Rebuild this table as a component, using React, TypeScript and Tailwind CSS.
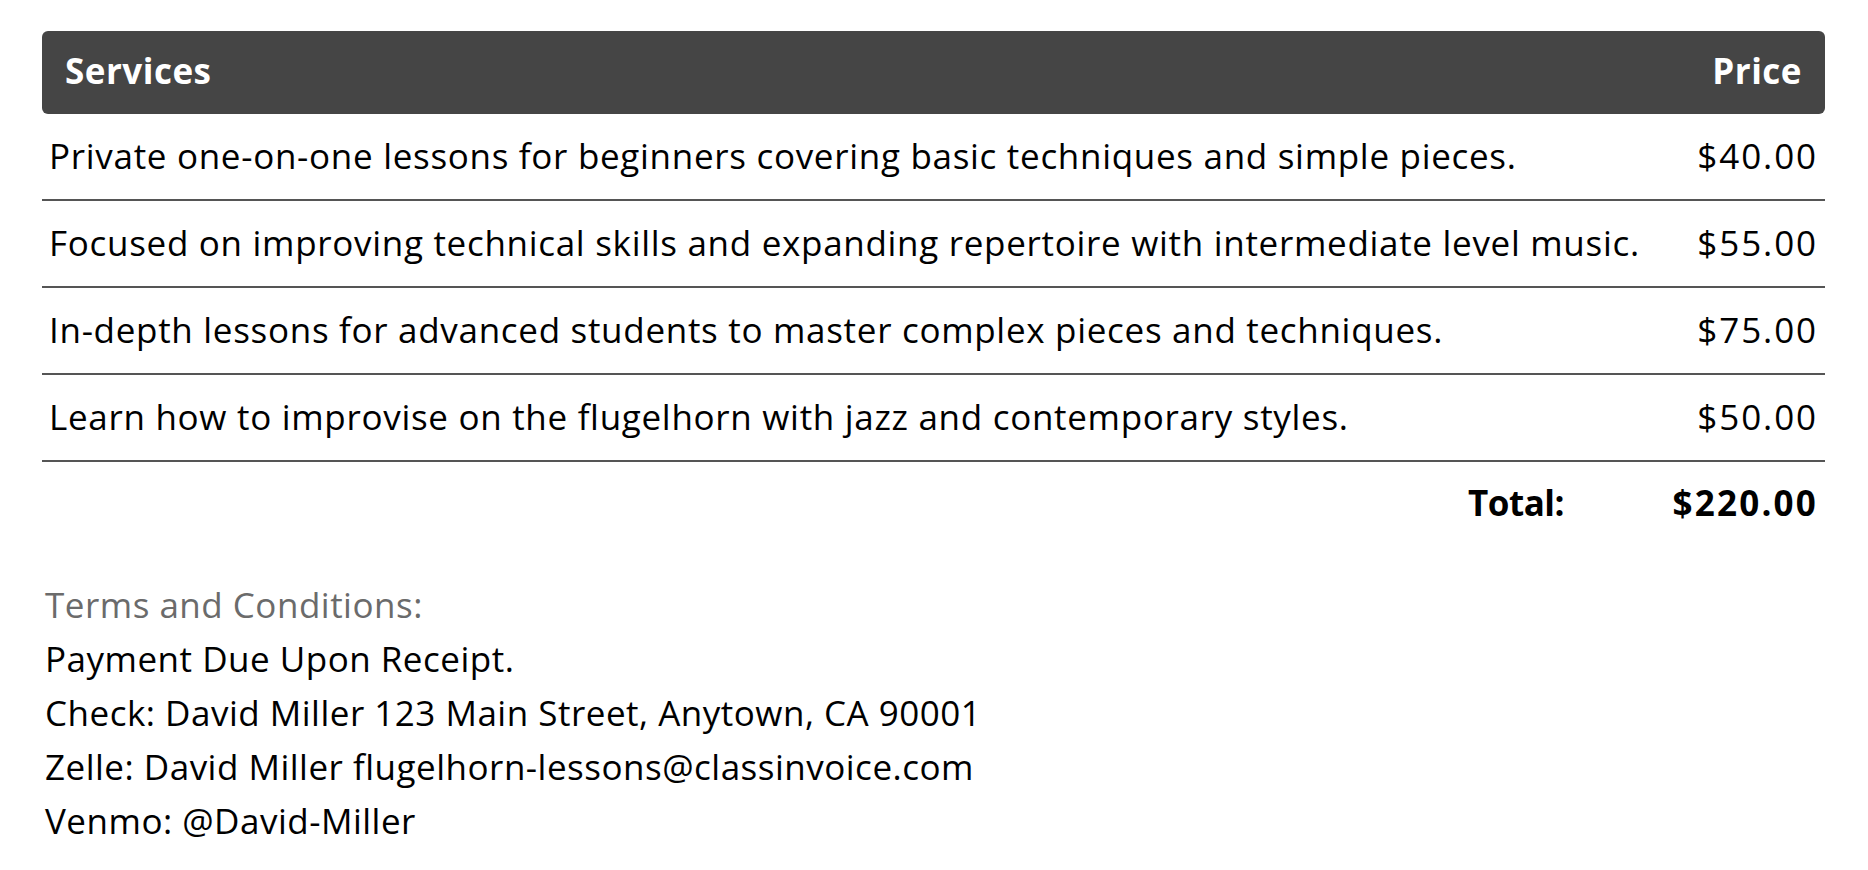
const services = [
  { desc: "Private one-on-one lessons for beginners covering basic techniques and simple pieces.", price: "$40.00" },
  { desc: "Focused on improving technical skills and expanding repertoire with intermediate level music.", price: "$55.00" },
  { desc: "In-depth lessons for advanced students to master complex pieces and techniques.", price: "$75.00" },
  { desc: "Learn how to improvise on the flugelhorn with jazz and contemporary styles.", price: "$50.00" },
];

const terms = [
  "Payment Due Upon Receipt.",
  "Check: David Miller 123 Main Street, Anytown, CA 90001",
  "Zelle: David Miller flugelhorn-lessons@classinvoice.com",
  "Venmo: @David-Miller",
];

export default function App() {
  return (
    <div className="min-h-screen w-full bg-white font-['Open_Sans',_sans-serif] font-medium text-black">
      <div className="ml-[42px] w-[1783px] pt-[31px]">
        <div className="flex h-[83px] items-center justify-between rounded-md bg-[#454545] px-[23px] pb-[3px] text-[35px] font-bold tracking-[0.5px] text-white">
          <span>Services</span>
          <span>Price</span>
        </div>

        {services.map((s) => (
          <div
            key={s.price + s.desc}
            className="flex h-[87px] items-center justify-between border-b-2 border-[#555555] px-[7px] text-[35px]"
          >
            <span className="tracking-[0.7px]">{s.desc}</span>
            <span className="tracking-[1.9px]">{s.price}</span>
          </div>
        ))}

        <div className="flex h-[82px] items-center justify-end pr-[7px] text-[35px] font-bold">
          <span className="tracking-[-0.5px]">Total:</span>
          <span className="w-[254px] text-right tracking-[2.2px]">$220.00</span>
        </div>
      </div>

      <div className="ml-[45px] mt-[34px] text-[35px] leading-[54px] tracking-[0.5px]">
        <p className="text-[#6b6b6b]">Terms and Conditions:</p>
        {terms.map((t) => (
          <p key={t}>{t}</p>
        ))}
      </div>
    </div>
  );
}
